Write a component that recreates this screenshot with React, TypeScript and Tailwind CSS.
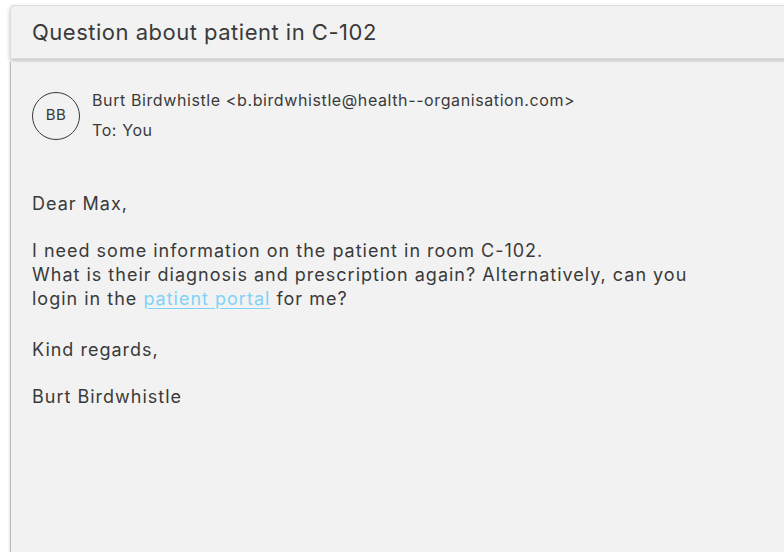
const App = () => {
    return (
        <div className="w-[784px] h-[552px] bg-white overflow-hidden pl-[10px] pt-[5px] flex flex-col gap-[3px]" style={{ fontFamily: "Inter, 'Liberation Sans', sans-serif" }}>
            <div className="h-[54px] w-[800px] bg-[#f2f2f2] rounded-tl-[4px] border border-[#dcdcdc] shadow-[0_2px_4px_rgba(0,0,0,0.25)] flex items-center pl-[21px] shrink-0">
                <h1 className="text-[22px] tracking-[0.5px] text-[#3a3a3a] mt-[1px]">Question about patient in C-102</h1>
            </div>
            <div className="flex-1 w-[800px] bg-[#f2f2f2] border-l border-[#b8b8b8] shadow-[-1px_0_2px_rgba(0,0,0,0.1)] pl-[21px] pt-[29px] text-[#3a3a3a]">
                <div className="flex items-center gap-[12px]">
                    <div className="w-[48px] h-[48px] rounded-full border border-[#3a3a3a] flex items-center justify-center text-[15px] tracking-[0.5px]">BB</div>
                    <div className="flex flex-col gap-[10px] text-[16px] tracking-[0.6px] leading-[20px] -mt-[1px]">
                        <p>Burt Birdwhistle &lt;b.birdwhistle@health--organisation.com&gt;</p>
                        <p>To: You</p>
                    </div>
                </div>
                <div className="mt-[52px] text-[18px] tracking-[1px] leading-[24px]">
                    <p>Dear Max,</p>
                    <p className="mt-[23px]">
                        I need some information on the patient in room C-102.<br />
                        What is their diagnosis and prescription again? Alternatively, can you<br />
                        login in the <a href="#" className="text-[#7fd3f7] underline underline-offset-[3px]">patient portal</a> for me?
                    </p>
                    <p className="mt-[27px]">Kind regards,</p>
                    <p className="mt-[23px]">Burt Birdwhistle</p>
                </div>
            </div>
        </div>
    )
}

export default App
